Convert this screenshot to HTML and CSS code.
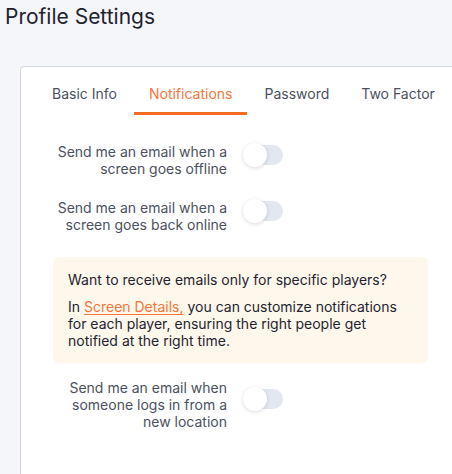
FILE: index.html
```html
<!DOCTYPE html>
<html lang="en">
<head>
<meta charset="utf-8">
<title>Profile Settings</title>
<link rel="stylesheet" href="styles.css">
</head>
<body>
<h1 class="page-title">Profile Settings</h1>
<div class="card">
  <nav class="tabs">
    <span class="tab">Basic Info</span>
    <span class="tab active">Notifications</span>
    <span class="tab">Password</span>
    <span class="tab">Two Factor</span>
  </nav>
  <div class="settings">
    <div class="row row-first">
      <span class="label">Send me an email when a screen goes offline</span>
      <span class="toggle"><span class="knob"></span></span>
    </div>
    <div class="row">
      <span class="label">Send me an email when a screen goes back online</span>
      <span class="toggle"><span class="knob"></span></span>
    </div>
    <div class="info">
      <p class="info-title">Want to receive emails only for specific players?</p>
      <p class="info-text">In <a class="link" href="#">Screen Details,</a> you can customize notifications for each player, ensuring the right people get notified at the right time.</p>
    </div>
    <div class="row row-last">
      <span class="label">Send me an email when someone logs in from a new location</span>
      <span class="toggle"><span class="knob"></span></span>
    </div>
  </div>
</div>
</body>
</html>
```
FILE: styles.css
```css
html {
  overflow: hidden;
}
body {
  margin: 0;
  background: #f5f6fa;
  font-family: Inter, "Noto Sans", sans-serif;
  color: #1f2937;
}
.page-title {
  margin: 4px 0 0 5px;
  font-size: 21px;
  line-height: 26px;
  font-weight: 400;
  color: #1f2330;
}
.card {
  margin: 36px 0 0 20px;
  width: 407px;
  height: 400px;
  padding: 17px 16px 16px;
  background: #fff;
  border: 1px solid #d3d5dc;
  border-radius: 4px;
}
.tabs {
  display: flex;
  gap: 2px;
}
.tab {
  flex-shrink: 0;
  white-space: nowrap;
  padding: 0 15px 8px;
  font-size: 14px;
  line-height: 20px;
  color: #4b5160;
  border-bottom: 3px solid transparent;
}
.tab.active {
  color: #f4763a;
  border-bottom-color: #f56b22;
}
.settings {
  display: flex;
  flex-direction: column;
}
.row {
  display: flex;
  align-items: center;
  gap: 16px;
  margin-top: 22px;
}
.row-first {
  margin-top: 28px;
}
.row-last {
  margin-top: 16px;
}
.label {
  width: 180px;
  margin-left: 10px;
  text-align: right;
  font-size: 14px;
  line-height: 17px;
  color: #4b5160;
}
.toggle {
  position: relative;
  flex-shrink: 0;
  width: 40px;
  height: 20px;
  margin-bottom: 11px;
  border-radius: 10px;
  background: #e3e7ef;
}
.knob {
  position: absolute;
  left: 0;
  top: -2px;
  width: 24px;
  height: 24px;
  border-radius: 50%;
  background: #fff;
  box-shadow: 0 1px 4px rgba(0, 0, 0, 0.14);
}
.info {
  margin: 24px 16px 0;
  padding: 14px 15px 14px;
  background: #fef8ec;
  border-radius: 6px;
}
.info p {
  margin: 0;
  font-size: 14px;
  line-height: 17px;
  color: #1f2330;
}
.info-text {
  margin-top: 10px !important;
}
.link {
  color: #f4763a;
  text-decoration: underline;
  text-underline-offset: 2px;
}
```
